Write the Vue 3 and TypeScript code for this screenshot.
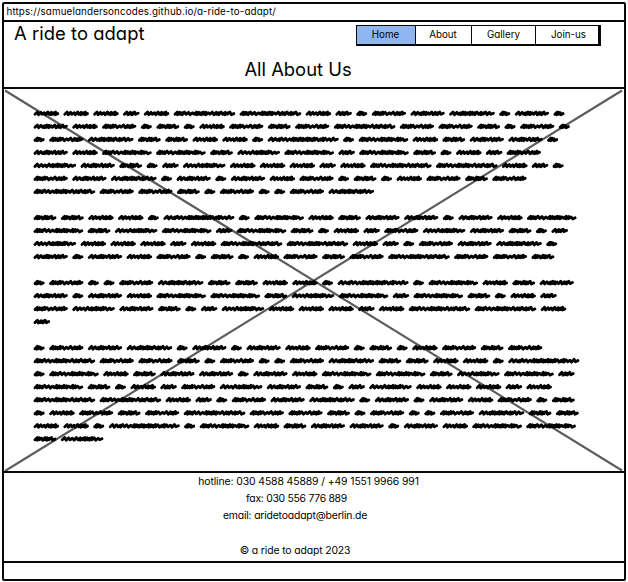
<script setup lang="ts">
interface Shape {
  width: number
  advance: number
  strokes: string
}

interface Scribble {
  id: string
  d: string
}

const links: string[] = ['Home', 'About', 'Gallery', 'Join-us']
const active = 'Home'

// Placeholder word shapes: "w" is a wide stroke, "n" a narrow one.
const shapes: Record<string, Shape> = {
  A: { width: 11, advance: 15.6, strokes: 'nnw' },
  B: { width: 16.5, advance: 20.8, strokes: 'wnnw' },
  C: { width: 22.8, advance: 27.3, strokes: 'nnwnnnw' },
  D: { width: 25.5, advance: 29.8, strokes: 'wwwwnnn' },
  E: { width: 34.2, advance: 38.7, strokes: 'nnnnwwwnnn' },
  F: { width: 34.2, advance: 38.7, strokes: 'wwnnnwwnnw' },
  G: { width: 42.5, advance: 47, strokes: 'wwwwnnnnnnww' },
  H: { width: 45.6, advance: 50, strokes: 'wwnnnnnnnwnnww' },
  I: { width: 49.6, advance: 54, strokes: 'nnnwwwnnnnnwnnw' },
  J: { width: 61.6, advance: 66, strokes: 'nnnwwwnnnnnwwnnwnnw' },
  K: { width: 71, advance: 75.3, strokes: 'wwnwwwnnnnnnnnnnwnnwww' },
}

const lines: string[] = [
  'DDDBDJJDBAEFHAFA',
  'FDEACADECEJEECAEA',
  'AEHCCDDAKAIDCFFA',
  'FDIICGIBICADBE',
  'GFCABGDDDBDJJDBA',
  'EFHAFAFDEACADECE',
  'JEECAEAAEH',
  '',
  'CCDDAKAIDCFFAFDI',
  'ICGIBICADBEGFCAB',
  'GDDDBDJJDBAEFHA',
  'FAFDEACADECEJEEC',
  '',
  'AEAAEHCCDDAKAIDCF',
  'FAFDIICGIBICADB',
  'EGFCABGDDDBDJJD',
  'B',
  '',
  'AEFHAFAFDEACADECE',
  'JEECAEAAEHCCDDAK',
  'AIDCFFAFDIICGIB',
  'ICADBEGFCABGDDDBD',
  'JJDBAEFHAFAFDEAC',
  'ADECEJEECAEAAEHCC',
  'DDAKAIDCFFAFDII',
  'CG',
]

const lineHeight = 13.02

function scribble(shape: Shape, left: number, y: number): string {
  const units = [...shape.strokes].map((s) => (s === 'w' ? 1.6 : 0.95))
  const total = units.reduce((a, b) => a + b, 0)
  const slant = 2.4
  const scale = (shape.width - 2.8 - slant) / total
  let x = left + 1.4
  let d = `M${x.toFixed(1)} ${(y + 1).toFixed(1)}`
  units.forEach((u, i) => {
    const top = y - 1.3 + (i % 3) * 0.4
    d += `L${(x + slant).toFixed(1)} ${top.toFixed(1)}`
    x += u * scale
    d += `L${x.toFixed(1)} ${(y + 1.4 - (i % 2) * 0.4).toFixed(1)}`
  })
  return d + `l${slant} -1.1`
}

const scribbles: Scribble[] = lines.flatMap((line, row) => {
  let x = 33.6
  return [...line].map((code, i) => {
    const shape = shapes[code]
    const d = scribble(shape, x, 113.3 + row * lineHeight)
    x += shape.advance
    return { id: `${row}-${i}`, d }
  })
})
</script>

<template>
  <div class="page">
    <div class="window">
      <div class="address"><span>https://samuelandersoncodes.github.io/a-ride-to-adapt/</span></div>
      <header class="header">
        <div class="top">
          <div class="brand">A ride to adapt</div>
          <nav class="nav">
            <a v-for="link in links" :key="link" class="tab" :class="[link.toLowerCase(), { active: link === active }]">{{ link }}</a>
          </nav>
        </div>
        <h1 class="heading">All About Us</h1>
      </header>
      <main class="content">
        <svg class="copy" viewBox="4 89 620 382" width="620" height="382">
          <path class="cross" d="M5 90.5L622 470.5M622 90.5L5 471" />
          <path v-for="s in scribbles" :key="s.id" class="word" :d="s.d" />
        </svg>
      </main>
      <footer class="footer">
        <p class="hotline">hotline: 030 4588 45889 / +49 1551 9966 991</p>
        <p class="fax">fax: 030 556 776 889</p>
        <p class="email">email: aridetoadapt@berlin.de</p>
        <p class="copyright">© a ride to adapt 2023</p>
      </footer>
      <div class="status"></div>
    </div>
  </div>
</template>

<style>
body {
  background: #fff;
}
</style>

<style scoped>
.page {
  box-sizing: border-box;
  width: 628px;
  height: 582px;
  padding: 2px 2px 1px;
  font-family: Inter, 'Open Sans', sans-serif;
  font-feature-settings: 'cv11' 1;
  color: #000;
}
.window {
  box-sizing: border-box;
  height: 579px;
  border: 2px solid #080808;
  border-radius: 2px;
  display: flex;
  flex-direction: column;
}
.address {
  box-sizing: border-box;
  height: 18px;
  border-bottom: 2px solid #080808;
  padding-left: 2.5px;
  font-size: 9.8px;
  letter-spacing: 0.13px;
  line-height: 15px;
  white-space: nowrap;
}
.header {
  box-sizing: border-box;
  height: 67px;
  border-bottom: 2px solid #080808;
}
.top {
  display: flex;
  justify-content: space-between;
  height: 35px;
  padding: 0 23px 0 10px;
}
.brand {
  font-size: 18.4px;
  letter-spacing: 0.05px;
  line-height: 22px;
  white-space: nowrap;
}
.nav {
  display: flex;
  box-sizing: border-box;
  width: 245px;
  height: 21px;
  margin-top: 3px;
  border: 1.5px solid #080808;
  border-width: 1px 3px 2px 1px;
}
.tab {
  box-sizing: border-box;
  padding-right: 1px;
  font-size: 9.8px;
  line-height: 18px;
  text-align: center;
  border-right: 1px solid #080808;
}
.home { width: 59px; }
.about { width: 56px; }
.gallery { width: 64px; padding-right: 0; }
.join-us { flex: 1; padding-left: 4px; border-right: 0; }
.active {
  background: #8fb5f1;
}
.heading {
  margin: 0;
  padding-right: 32px;
  font-size: 18.4px;
  font-weight: 400;
  line-height: 24px;
  text-align: center;
}
.content {
  height: 382px;
}
.copy {
  display: block;
}
.cross {
  fill: none;
  stroke: #5c5c5c;
  stroke-width: 2.2;
}
.word {
  fill: none;
  stroke: #000;
  stroke-width: 2.9;
  stroke-linejoin: round;
  stroke-linecap: round;
}
.footer {
  box-sizing: border-box;
  height: 92px;
  border-top: 2px solid #080808;
  border-bottom: 2px solid #080808;
  padding-right: 38px;
  font-size: 10.4px;
  letter-spacing: -0.13px;
  line-height: 17px;
  text-align: center;
}
.footer p {
  margin: 0;
}
.footer .hotline {
  margin-right: -27px;
  letter-spacing: -0.1px;
}
.footer .fax {
  padding-left: 3px;
  letter-spacing: -0.28px;
}
.footer .email {
  letter-spacing: -0.18px;
}
.footer .copyright {
  margin-top: 18px;
}
.status {
  flex: 1;
}
</style>
